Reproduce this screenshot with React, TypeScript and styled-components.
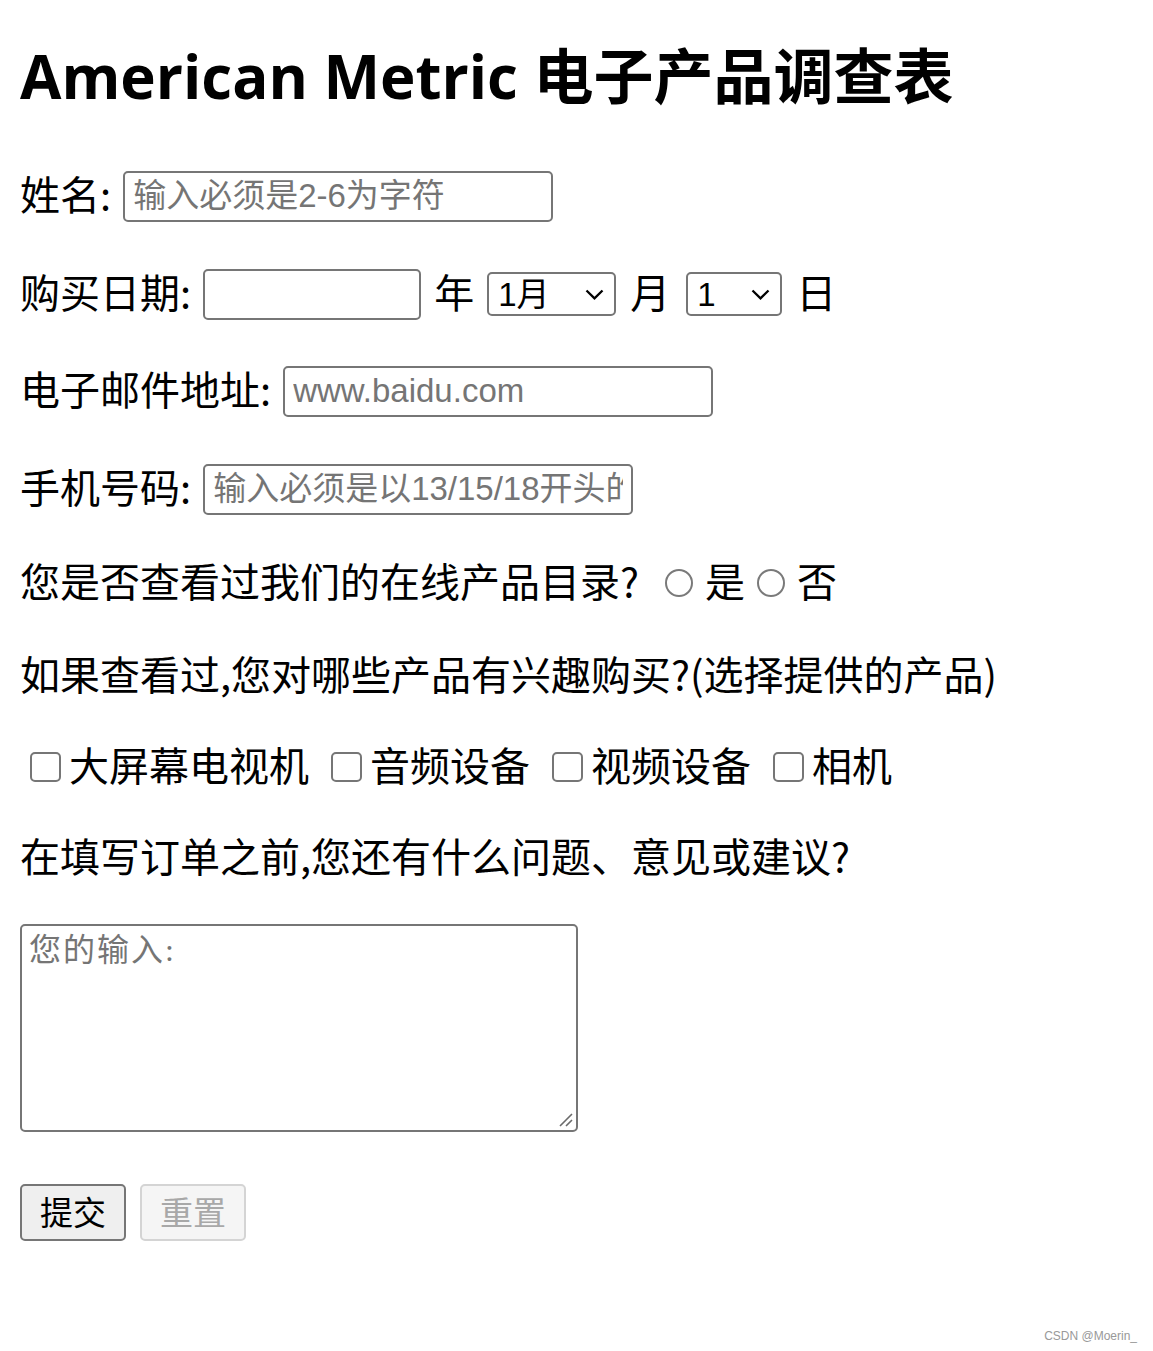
import React from "react";
import styled, { createGlobalStyle } from "styled-components";

const Global = createGlobalStyle`
  html, body {
    margin: 0;
    padding: 0;
    background: #fff;
  }
  body {
    font-family: "Noto Sans CJK SC", "Liberation Sans", sans-serif;
    color: #000;
  }
`;

const Page = styled.div`
  position: relative;
  box-sizing: border-box;
  height: 1351px;
  padding: 36px 20px 0;
  overflow: hidden;
`;

const Title = styled.h2`
  margin: 0;
  font-family: "Open Sans", "Noto Sans CJK SC", sans-serif;
  font-size: 60px;
  font-weight: 700;
  line-height: 80px;
  white-space: nowrap;
`;

const Form = styled.form`
  display: flex;
  flex-direction: column;
  align-items: flex-start;
`;

const Row = styled.div<{ $top: number }>`
  display: flex;
  align-items: center;
  height: 56px;
  margin-top: ${(p) => p.$top}px;
  font-size: 40px;
  white-space: nowrap;
`;

const Text = styled.span<{ $left?: number }>`
  margin-left: ${(p) => p.$left ?? 0}px;
  margin-bottom: 6px;
`;

const TextInput = styled.input<{ $w: number; $left?: number }>`
  box-sizing: border-box;
  width: ${(p) => p.$w}px;
  height: 51px;
  margin: 0 0 0 ${(p) => p.$left ?? 12}px;
  padding: 0 8px;
  border: 2px solid #767676;
  border-radius: 5px;
  font-family: "Liberation Sans", "Noto Sans CJK SC", sans-serif;
  font-size: 33px;
  color: #000;
  background: #fff;
  outline: none;
  &::placeholder {
    color: #757575;
  }
`;

const SelectBox = styled.span<{ $w: number; $left: number }>`
  position: relative;
  display: inline-flex;
  width: ${(p) => p.$w}px;
  margin-left: ${(p) => p.$left}px;
`;

const Select = styled.select`
  appearance: none;
  box-sizing: border-box;
  width: 100%;
  height: 44px;
  padding: 0 0 0 9px;
  border: 2px solid #767676;
  border-radius: 5px;
  background: #fff;
  font-family: "Liberation Sans", "Noto Sans CJK SC", sans-serif;
  font-size: 33px;
  color: #000;
  outline: none;
`;

const Chevron = styled.svg`
  position: absolute;
  right: 12px;
  top: 17px;
  pointer-events: none;
`;

const Radio = styled.input`
  appearance: none;
  box-sizing: border-box;
  width: 28px;
  height: 28px;
  margin: 0 12px 0 0;
  border: 2px solid #7a7a7a;
  border-radius: 50%;
  background: #fff;
`;

const Choice = styled.label<{ $left: number }>`
  display: inline-flex;
  align-items: center;
  margin-left: ${(p) => p.$left}px;
  & > span {
    margin-bottom: 6px;
  }
`;

const Check = styled.input`
  appearance: none;
  box-sizing: border-box;
  width: 31px;
  height: 30px;
  margin: 0 8px 0 0;
  border: 2px solid #767676;
  border-radius: 5px;
  background: #fff;
`;

const AreaBox = styled.div`
  position: relative;
  margin-top: 38px;
  width: 558px;
  height: 208px;
`;

const TextArea = styled.textarea`
  box-sizing: border-box;
  width: 100%;
  height: 100%;
  padding: 5px 7px;
  border: 2px solid #767676;
  border-radius: 5px;
  resize: none;
  font-family: "Liberation Serif", "Noto Sans CJK SC", serif;
  font-size: 32px;
  line-height: 1.2;
  outline: none;
  &::placeholder {
    color: #757575;
    letter-spacing: 2px;
  }
`;

const Grip = styled.svg`
  position: absolute;
  right: 5px;
  bottom: 5px;
  pointer-events: none;
`;

const Buttons = styled.div`
  display: flex;
  gap: 14px;
  margin-top: 52px;
`;

const Button = styled.button`
  box-sizing: border-box;
  width: 106px;
  height: 57px;
  padding: 0 0 4px;
  border: 2px solid #767676;
  border-radius: 5px;
  background: #efefef;
  font-family: "Noto Sans CJK SC", sans-serif;
  font-size: 33px;
  color: #000;
  &:disabled {
    border-color: #d4d4d4;
    background: #f5f5f5;
    color: #a8a8a8;
  }
`;

const Watermark = styled.div`
  position: absolute;
  right: 16px;
  bottom: 8px;
  font-family: "Liberation Sans", sans-serif;
  font-size: 12px;
  color: #999;
`;

function Arrow() {
  return (
    <Chevron width="19" height="11" viewBox="0 0 19 11">
      <path d="M1.5 1.5 L9.5 9.3 L17.5 1.5" fill="none" stroke="#000" strokeWidth="2.3" />
    </Chevron>
  );
}

export default function App() {
  return (
    <Page>
      <Global />
      <Title>American Metric 电子产品调查表</Title>
      <Form onSubmit={(e) => e.preventDefault()}>
        <Row $top={52}>
          <Text>姓名:</Text>
          <TextInput $w={430} placeholder="输入必须是2-6为字符" />
        </Row>
        <Row $top={42}>
          <Text>购买日期:</Text>
          <TextInput $w={218} />
          <Text $left={13}>年</Text>
          <SelectBox $w={129} $left={13}>
            <Select defaultValue="1">
              {Array.from({ length: 12 }, (_, i) => (
                <option key={i} value={i + 1}>{i + 1}月</option>
              ))}
            </Select>
            <Arrow />
          </SelectBox>
          <Text $left={14}>月</Text>
          <SelectBox $w={96} $left={16}>
            <Select defaultValue="1">
              {Array.from({ length: 31 }, (_, i) => (
                <option key={i} value={i + 1}>{i + 1}</option>
              ))}
            </Select>
            <Arrow />
          </SelectBox>
          <Text $left={14}>日</Text>
        </Row>
        <Row $top={41}>
          <Text>电子邮件地址:</Text>
          <TextInput $w={430} placeholder="www.baidu.com" />
        </Row>
        <Row $top={42}>
          <Text>手机号码:</Text>
          <TextInput $w={430} placeholder="输入必须是以13/15/18开头的11位数字" />
        </Row>
        <Row $top={38}>
          <Text>您是否查看过我们的在线产品目录?</Text>
          <Choice $left={26}>
            <Radio type="radio" name="seen" />
            <span>是</span>
          </Choice>
          <Choice $left={12}>
            <Radio type="radio" name="seen" />
            <span>否</span>
          </Choice>
        </Row>
        <Row $top={37}>
          <Text>如果查看过,您对哪些产品有兴趣购买?(选择提供的产品)</Text>
        </Row>
        <Row $top={35}>
          <Choice $left={10}>
            <Check type="checkbox" />
            <span>大屏幕电视机</span>
          </Choice>
          <Choice $left={22}>
            <Check type="checkbox" />
            <span>音频设备</span>
          </Choice>
          <Choice $left={22}>
            <Check type="checkbox" />
            <span>视频设备</span>
          </Choice>
          <Choice $left={22}>
            <Check type="checkbox" />
            <span>相机</span>
          </Choice>
        </Row>
        <Row $top={35}>
          <Text>在填写订单之前,您还有什么问题、意见或建议?</Text>
        </Row>
        <AreaBox>
          <TextArea placeholder="您的输入:" />
          <Grip width="14" height="14" viewBox="0 0 14 14">
            <path d="M1 13 L13 1 M7 13 L13 7" stroke="#6b6b6b" strokeWidth="1.6" />
          </Grip>
        </AreaBox>
        <Buttons>
          <Button type="submit">提交</Button>
          <Button type="reset" disabled>重置</Button>
        </Buttons>
      </Form>
      <Watermark>CSDN @Moerin_</Watermark>
    </Page>
  );
}
